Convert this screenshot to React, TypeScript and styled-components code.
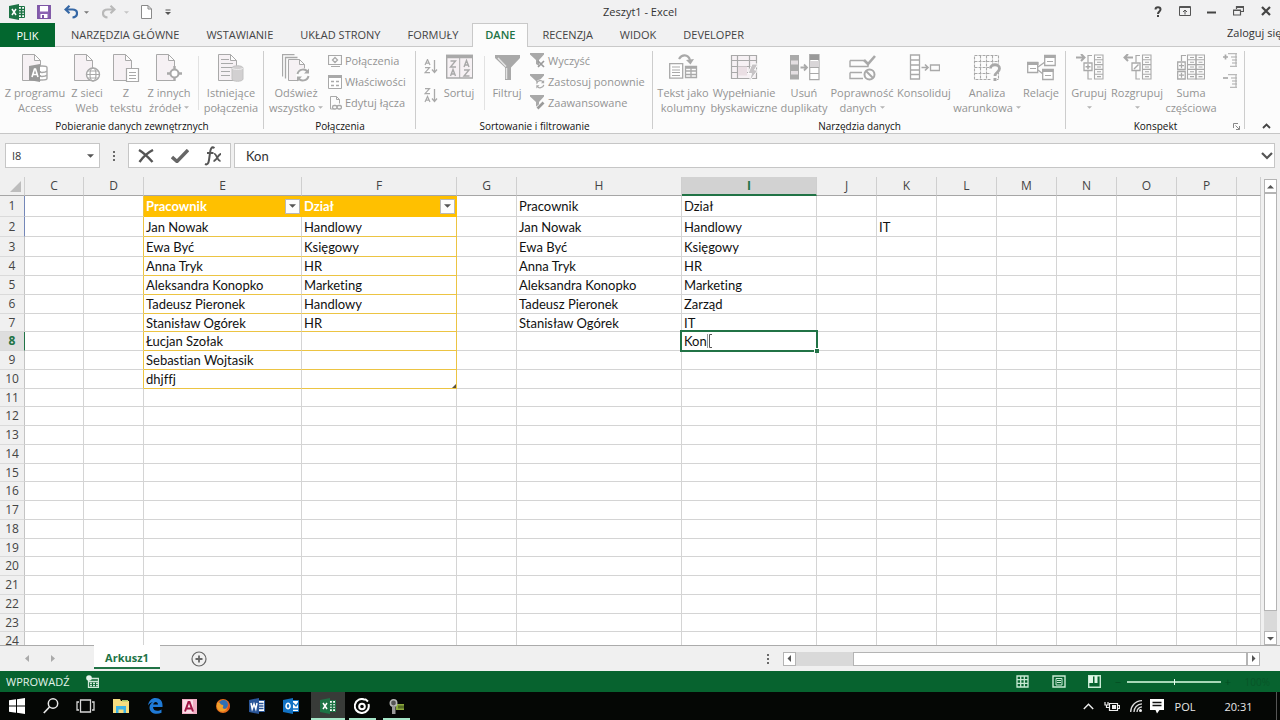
import React, { useState } from 'react';
import styled, { createGlobalStyle } from 'styled-components';

const UI = '"Open Sans", "Noto Sans", sans-serif';
const CELL = 'Lato, "Open Sans", sans-serif';
const GREEN = '#217346';
const BAR = '#07632f';
const G = '#a9a9a9';
const GD = '#9a9a9a';
const TINT = '#f6f1f4';

const Global = createGlobalStyle`
  *, *::before, *::after { box-sizing: border-box; }
  body { margin: 0; background: #f0f0f0; font-family: ${UI}; font-size: 11px; color: #333; overflow: hidden; }
  button, input { font: inherit; color: inherit; margin: 0; padding: 0; border: 0; background: none; border-radius: 0; outline: 0; }
  button { cursor: default; }
  svg { display: block; flex: none; }
`;

const Window = styled.div`
  display: flex;
  flex-direction: column;
  height: 100vh;
  font-variant-ligatures: none;
`;

/* ---------- title bar ---------- */
const TitleBar = styled.header`
  display: grid;
  grid-template-columns: 1fr auto 1fr;
  height: 23px;
  background: #f1f1f2;
`;
const QuickAccess = styled.div`
  display: flex;
  align-items: center;
  padding-left: 8px;
`;
const QuickButton = styled.button<{ $w: number }>`
  display: flex;
  justify-content: center;
  align-items: center;
  width: ${(p) => p.$w}px;
  height: 22px;
`;
const Title = styled.h1`
  margin: 0;
  font-size: 11px;
  font-weight: 400;
  line-height: 24px;
  color: #333;
`;
const WindowButtons = styled.div`
  display: flex;
  justify-content: flex-end;
  padding-right: 1px;
`;
const WindowButton = styled.button`
  display: flex;
  align-items: center;
  justify-content: center;
  width: 27px;
  height: 22px;
`;

/* ---------- tabs ---------- */
const TabRow = styled.nav`
  display: flex;
  height: 24px;
  background: #f1f1f2;
  border-bottom: 1px solid #c9c9c9;
`;
const FileTab = styled.button`
  width: 55px;
  height: 24px;
  margin-right: 3px;
  background: #03672f;
  color: #fff;
`;
const Tab = styled.button<{ $active?: boolean }>`
  height: 24px;
  padding: 0 12px 2px;
  border: 1px solid ${(p) => (p.$active ? '#c9c9c9' : 'transparent')};
  border-bottom: 0;
  background: ${(p) => (p.$active ? '#fcfcfc' : 'transparent')};
  color: ${(p) => (p.$active ? GREEN : '#444')};
  font-weight: ${(p) => (p.$active ? 600 : 400)};
  white-space: nowrap;
  & + & { margin-left: 1px; }
`;
const SignIn = styled.a`
  width: 53px;
  margin-left: auto;
  overflow: hidden;
  line-height: 20px;
  white-space: nowrap;
  color: #333;
  text-decoration: none;
`;

/* ---------- ribbon ---------- */
const Ribbon = styled.section`
  display: flex;
  height: 87px;
  background: #fcfcfc;
  border-bottom: 1px solid #c6c6c6;
`;
const Group = styled.div<{ $w: number }>`
  position: relative;
  display: flex;
  flex-direction: column;
  flex: none;
  width: ${(p) => p.$w}px;
  &::after {
    content: '';
    position: absolute;
    right: 0;
    top: 4px;
    bottom: 4px;
    width: 1px;
    background: #cdcdcd;
  }
`;
const GroupBody = styled.div<{ $pad: number }>`
  display: flex;
  height: 72px;
  padding-left: ${(p) => p.$pad}px;
`;
const GroupLabel = styled.div`
  font-size: 10px;
  line-height: 14px;
  text-align: center;
  color: #111;
`;
const BigButton = styled.button<{ $w: number }>`
  display: flex;
  flex-direction: column;
  align-items: center;
  flex: none;
  width: ${(p) => p.$w}px;
  padding-top: 7px;
  color: #949494;
  line-height: 15px;
  white-space: nowrap;
  & > svg { margin-bottom: 3px; }
`;
const Line = styled.span`
  display: flex;
  align-items: center;
  gap: 3px;
  height: 15px;
`;
const Divider = styled.div<{ $l: number; $r: number }>`
  width: 1px;
  height: 54px;
  margin: 9px ${(p) => p.$r}px 0 ${(p) => p.$l}px;
  background: #e2e2e2;
`;
const Stack = styled.div<{ $gap?: number; $top?: number; $left?: number }>`
  display: flex;
  flex-direction: column;
  gap: ${(p) => p.$gap || 0}px;
  padding: ${(p) => p.$top || 3}px 0 0 ${(p) => p.$left || 0}px;
`;
const SmallButton = styled.button`
  display: flex;
  align-items: center;
  gap: 3px;
  height: 21px;
  color: #949494;
  white-space: nowrap;
`;
const RibbonTail = styled.div`
  display: flex;
  flex: 1;
  justify-content: flex-end;
  align-items: flex-end;
  padding: 0 9px 4px 0;
`;
const Launcher = styled.button`
  position: absolute;
  right: 5px;
  bottom: 3px;
`;

/* ---------- formula bar ---------- */
const FormulaBar = styled.div`
  display: flex;
  align-items: center;
  height: 43px;
  padding: 0 5px;
  background: #f0f0f0;
`;
const Field = styled.div<{ $w?: number }>`
  display: flex;
  align-items: center;
  height: 25px;
  border: 1px solid #c6c6c6;
  background: #fff;
  ${(p) => (p.$w ? `width: ${p.$w}px; flex: none;` : 'flex: 1; margin-left: 3px;')}
`;
const NameInput = styled.input`
  flex: 1;
  min-width: 0;
  padding-left: 6px;
`;
const FormulaInput = styled.input`
  flex: 1;
  min-width: 0;
  padding-left: 11px;
  font-family: ${CELL};
  font-size: 13px;
`;
const FieldButton = styled.button<{ $w: number }>`
  display: flex;
  align-items: center;
  justify-content: center;
  width: ${(p) => p.$w}px;
  height: 23px;
`;
const Dots = styled.div<{ $w: number }>`
  display: flex;
  flex: none;
  flex-direction: column;
  align-items: center;
  justify-content: center;
  gap: 2px;
  width: ${(p) => p.$w}px;
  & > i { width: 2px; height: 2px; background: #6a6a6a; }
`;

/* ---------- sheet ---------- */
const SheetArea = styled.main`
  display: flex;
  flex: 1;
  min-height: 0;
  background: #f0f0f0;
`;
const GridClip = styled.div`
  flex: 1;
  min-width: 0;
  overflow: hidden;
`;
const Grid = styled.table`
  width: 100%;
  table-layout: fixed;
  border-spacing: 0;
  border-collapse: separate;
  background: #fff;
  font-family: ${CELL};
  font-size: 13px;
  line-height: 16px;
  color: #111;
`;
const BodyRow = styled.tr`
  height: 19px;
  &:nth-child(4n + 3) { height: 18px; }
  &:nth-child(1) { height: 21px; }
  &:nth-child(2), &:nth-child(3) { height: 20px; }
`;
const ColHead = styled.th<{ $active?: boolean }>`
  height: 19px;
  padding: 0;
  font-family: ${UI};
  font-size: 12px;
  font-weight: ${(p) => (p.$active ? 700 : 400)};
  color: ${(p) => (p.$active ? GREEN : '#444')};
  background: ${(p) => (p.$active ? '#d2d2d2' : '#f0f0f0')};
  border-right: 1px solid #cfcfcf;
  border-bottom: ${(p) => (p.$active ? `2px solid ${GREEN}` : '1px solid #a6a6a6')};
`;
const Corner = styled(ColHead)`
  & > svg { margin: 0 0 0 10px; }
`;
const RowHead = styled.th<{ $active?: boolean; $mark?: boolean }>`
  padding: 0;
  font-family: ${UI};
  font-size: 12px;
  font-weight: ${(p) => (p.$active ? 700 : 400)};
  color: ${(p) => (p.$active ? GREEN : '#444')};
  background: ${(p) => (p.$active ? '#dedede' : '#f0f0f0')};
  border-bottom: 1px solid #dadada;
  border-right: 1px solid ${(p) => (p.$active ? GREEN : p.$mark ? '#7487b8' : '#c4c4c4')};
`;
const Cell = styled.td<{ $gold?: boolean; $goldRight?: boolean }>`
  position: relative;
  padding: 0 2px;
  white-space: nowrap;
  border-right: 1px solid ${(p) => (p.$goldRight ? '#ecc443' : '#d4d4d4')};
  border-bottom: 1px solid ${(p) => (p.$gold ? '#ecc443' : '#d4d4d4')};
`;
const TableHeadCell = styled(Cell)`
  background: #ffc000;
  border-color: #ffc000;
  color: #fff;
  font-weight: 700;
  padding: 0 1px 0 2px;
`;
const HeadContent = styled.div`
  display: flex;
  align-items: center;
  justify-content: space-between;
`;
const FilterButton = styled.button`
  display: flex;
  align-items: center;
  justify-content: center;
  width: 15px;
  height: 15px;
  background: #fdfdfd;
  border: 1px solid #b9b9b9;
`;
const TableCorner = styled.span`
  position: absolute;
  right: 0;
  bottom: 0;
  border: 2px solid #5b5340;
  border-left-color: transparent;
  border-top-color: transparent;
`;
const ActiveFrame = styled.div`
  position: absolute;
  inset: -2px;
  z-index: 1;
  border: 2px solid ${GREEN};
  pointer-events: none;
  &::after {
    content: '';
    position: absolute;
    right: -3px;
    bottom: -3px;
    width: 5px;
    height: 5px;
    background: ${GREEN};
    border: solid #fff;
    border-width: 1px 0 0 1px;
  }
`;
const CellInput = styled.input`
  display: block;
  width: 100%;
  height: 16px;
`;
const Pointer = styled.svg`
  position: absolute;
  left: 23px;
  top: 1px;
`;

/* ---------- scroll bars ---------- */
const VScroll = styled.div`
  display: flex;
  flex-direction: column;
  flex: none;
  width: 16px;
  padding: 2px 3px 0 0;
  margin-left: 3px;
`;
const HScroll = styled.div`
  display: flex;
  width: 477px;
  height: 14px;
  margin-right: 20px;
`;
const ScrollButton = styled.button`
  display: flex;
  align-items: center;
  justify-content: center;
  flex: none;
  width: 13px;
  height: 14px;
  background: #fff;
  border: 1px solid #b4b4b4;
`;
const Thumb = styled.div`
  flex: 1;
  background: #fff;
  border: 1px solid #b4b4b4;
`;
const Track = styled.div<{ $size: number }>`
  flex: 0 0 ${(p) => p.$size}px;
  background: #d9d9d9;
`;

/* ---------- sheet tabs ---------- */
const SheetTabs = styled.div`
  display: flex;
  align-items: center;
  height: 26px;
  background: #f0f0f0;
`;
const NavButton = styled.button`
  display: flex;
  justify-content: center;
  width: 26px;
`;
const SheetNav = styled.div`
  display: flex;
  align-items: center;
  align-self: flex-start;
  width: 94px;
  height: 26px;
  padding-left: 14px;
  border-top: 1px solid #ababab;
`;
const SheetTab = styled.button`
  align-self: flex-start;
  width: 66px;
  height: 24px;
  padding-top: 2px;
  background: #fff;
  border-bottom: 2px solid ${GREEN};
  color: ${GREEN};
  font-weight: 700;
`;
const TabRest = styled.div`
  display: flex;
  flex: 1;
  align-items: center;
  align-self: flex-start;
  height: 26px;
  border-top: 1px solid #ababab;
  padding-left: 31px;
`;
const Spacer = styled.div`
  flex: 1;
`;

/* ---------- status bar ---------- */
const StatusBar = styled.footer`
  display: flex;
  align-items: center;
  height: 21px;
  padding-left: 6px;
  background: ${BAR};
  color: #e4f3ea;
  & > svg { margin-left: 16px; }
`;
const ViewButtons = styled.div`
  display: flex;
  gap: 22px;
  margin-right: 11px;
`;
const ViewButton = styled.button`
  width: 14px;
`;
const ZoomMark = styled.button`
  width: 8px;
  margin: 0 1px;
  line-height: 20px;
  color: #044d22;
`;
const ZoomSlider = styled.input`
  width: 94px;
  height: 14px;
  margin: 0 2px 0 4px;
  appearance: none;
  background: linear-gradient(#a8d8b8, #a8d8b8) center / 100% 2px no-repeat;
  &::-webkit-slider-thumb {
    appearance: none;
    width: 1px;
    height: 6px;
    background: #e8fff0;
  }
`;
const ZoomValue = styled.span`
  width: 47px;
  padding-right: 10px;
  text-align: right;
  font-size: 10px;
  color: #075528;
`;

/* ---------- task bar ---------- */
const TaskBar = styled.footer`
  display: flex;
  height: 28px;
  background: #050705;
  color: #e8e8e8;
`;
const TaskButton = styled.button`
  display: flex;
  align-items: center;
  justify-content: center;
  width: 34px;
  height: 28px;
`;
const Pinned = styled.div`
  display: flex;
  padding: 0 3px 0 2px;
`;
const RunningButton = styled(TaskButton)<{ $active?: boolean }>`
  position: relative;
  background: ${(p) => (p.$active ? '#383b38' : 'transparent')};
  &::after {
    content: '';
    position: absolute;
    bottom: 0;
    left: ${(p) => (p.$active ? 0 : 4)}px;
    right: ${(p) => (p.$active ? 0 : 3)}px;
    height: 2px;
    background: #a5e6c8;
  }
`;
const Tray = styled.div`
  display: flex;
  align-items: center;
  margin-left: auto;
  height: 28px;
`;
const TrayButton = styled.button<{ $w: number }>`
  display: flex;
  justify-content: center;
  width: ${(p) => p.$w}px;
  white-space: nowrap;
`;
const ShowDesktop = styled.button`
  width: 4px;
  height: 28px;
  border-left: 1px solid #555;
`;

/* ---------- icons ---------- */
type IcoProps = { w: number; h: number; children: React.ReactNode; stroke?: string };
const Ico = ({ w, h, children, stroke = G }: IcoProps) => (
  <svg width={w} height={h} viewBox={`0 0 ${w} ${h}`} fill="none" stroke={stroke} strokeWidth="1" aria-hidden="true">
    {children}
  </svg>
);
const Caret = ({ c = '#b5b5b5', w = 5 }: { c?: string; w?: number }) => (
  <svg width={w} height={(w + 1) / 2} viewBox="0 0 6 3" fill={c} aria-hidden="true"><path d="M0 0h6L3 3z" /></svg>
);
const Doc = ({ x = 0 }: { x?: number }) => (
  <path d={`M${x + 0.5} .5h12l6 6v20h-18zM${x + 12.5} .5v6h6`} fill={TINT} />
);

const AccessIco = () => (
  <Ico w={27} h={28}>
    <Doc />
    <path d="M15 13.5c0-2 10-2 10 0v11c0 2-10 2-10 0zM15 17c2 2 8 2 10 0M15 21c2 2 8 2 10 0" fill="#fff" strokeWidth="1.4" />
    <path d="M7 12l11-2v18l-11-2z" fill="#999" stroke="none" />
    <path d="M10 23l2.500-8h1l2.500 8M11 20.500h4" stroke="#fff" strokeWidth="1.600" />
  </Ico>
);
const WebIco = () => (
  <Ico w={27} h={28}>
    <Doc />
    <circle cx="19" cy="20.500" r="6.500" fill="#fff" strokeWidth="1.400" />
    <ellipse cx="19" cy="20.500" rx="3" ry="6.500" strokeWidth="1.200" />
    <path d="M12.500 20.500h13M13.500 17h11M13.500 24h11" strokeWidth="1.200" />
  </Ico>
);
const TextIco = () => (
  <Ico w={27} h={28}>
    <Doc />
    <path d="M13.500 14.500h12v13h-12z" fill="#fff" strokeWidth="1.200" />
    <path d="M16 18.500h7M16 21.500h7M16 24.500h7" />
  </Ico>
);
const SourcesIco = () => (
  <Ico w={27} h={28}>
    <Doc />
    <circle cx="18.500" cy="19.500" r="4" fill="#fff" strokeWidth="2" />
    <path d="M18.500 12v4M18.500 23v4M11 19.500h4M22 19.500h4" strokeWidth="2.400" />
  </Ico>
);
const ExistingIco = () => (
  <Ico w={27} h={28}>
    <Doc />
    <path d="M3 5.500h8M3 9.500h12M3 13.500h12M3 17.500h9M3 21.500h9" />
    <path d="M14 14c0-3 11-3 11 0v11c0 3-11 3-11 0z" fill="#d2d0d1" stroke="#c2c2c2" />
    <path d="M14 14c1 2 10 2 11 0" stroke="#eee" />
  </Ico>
);
const RefreshArrows = ({ x, y, s = 1 }: { x: number; y: number; s?: number }) => (
  <g transform={`translate(${x} ${y}) scale(${s})`} strokeWidth="2">
    <path d="M1 5.500c1-5 8-6 10-2M12 7.500c-1 5-8 6-10 2" />
    <path d="M12.500 0v5h-5zM.5 13v-5h5z" fill={G} stroke="none" />
  </g>
);
const RefreshIco = () => (
  <Ico w={29} h={28}>
    <path d="M.5 22.500v-22h12M3.500 24.500v-21h12" strokeWidth="1.300" />
    <path d="M6.500 5.500h11l5 5v16h-16zM17.500 5.500v5h5" fill={TINT} />
    <circle cx="21" cy="21" r="7" fill="#fcfcfc" stroke="none" />
    <RefreshArrows x={14.500} y={14.500} />
  </Ico>
);
const ConnectionsIco = () => (
  <Ico w={14} h={13}>
    <path d="M.5 1.500h13v9H.5zM3 12.500h9" strokeWidth="1.200" />
    <path d="M7 3.500l2.500 2.500L7 8.500 4.500 6z" strokeWidth="1.300" />
  </Ico>
);
const PropertiesIco = () => (
  <Ico w={14} h={14}>
    <path d="M.5 .5h13v13H.5z" fill="#fff" />
    <path d="M0 1.500h14" strokeWidth="3" />
    <path d="M3 6.500h3M8 6.500h3M3 10.500h3M8 10.500h3" strokeWidth="1.500" />
  </Ico>
);
const LinksIco = () => (
  <Ico w={14} h={14}>
    <path d="M5.500 13H2.500V.5h6l3 3v4M8.500 .5v3h3" />
    <rect x="4.500" y="9.500" width="4.500" height="3.500" rx="1.700" strokeWidth="1.300" />
    <rect x="9" y="9.500" width="4.500" height="3.500" rx="1.700" strokeWidth="1.300" />
  </Ico>
);
const SortIco = ({ flip }: { flip?: boolean }) => {
  const a = 'M1 6L3.500 .5 6 6M2 4.200h3';
  const z = 'M1 .7h4.500L1 5.700h5';
  return (
    <Ico w={14} h={15}>
      <path d={flip ? z : a} strokeWidth="1.200" />
      <g transform="translate(0 8)"><path d={flip ? a : z} strokeWidth="1.200" /></g>
      <path d="M10.500 1v12M8 10.500l2.500 3 2.500-3" strokeWidth="1.300" />
    </Ico>
  );
};
const SortDialogIco = () => (
  <Ico w={27} h={28}>
    <path d="M.7 1.500h26v22.500H.7z" fill={TINT} strokeWidth="1.400" />
    <path d="M0 2.500h27" strokeWidth="3.500" />
    <path d="M13.700 4v20" />
    <path d="M4.500 7h5l-5 6h5.500M18 13l2.500-6.500L23 13M19 11h3M4.500 22L7 15.500 9.500 22M5.500 20h3M18 16h5l-5 6h5.500" strokeWidth="1.400" />
  </Ico>
);
const FilterIco = () => (
  <Ico w={27} h={28}>
    <path d="M1 1h25v3l-9 9.500V26h-6V13.500L1 4z" fill={G} stroke="none" />
    <path d="M12.500 14v11M4 4l8 8.500" stroke="#e4e4e4" strokeWidth="1.500" />
  </Ico>
);
const SmallFunnel = ({ kind }: { kind: 'clear' | 'again' | 'adv' }) => (
  <Ico w={15} h={15}>
    <path d="M0 0h14v1.500L9 7v6l-3-2V7L0 1.500z" fill={G} stroke="none" />
    {kind === 'clear' && <path d="M8 8l6 6M14 8l-6 6" stroke={GD} strokeWidth="1.700" />}
    {kind === 'again' && (<><circle cx="10.500" cy="10" r="4.500" fill="#fcfcfc" stroke="none" /><RefreshArrows x={6} y={6} s={0.65} /></>)}
    {kind === 'adv' && (<><path d="M6 15l1-4 6-5 2 2-6 5z" fill="#fcfcfc" stroke="none" /><path d="M7.500 13.500l6-6" stroke={GD} strokeWidth="2.600" /></>)}
  </Ico>
);
const TextToColumnsIco = () => (
  <Ico w={29} h={28}>
    <path d="M.7 9.700h13v14.500H.7z" fill="#fff" strokeWidth="1.300" />
    <path d="M3 13h8M3 16h8M3 18.500h8M3 21.500h8" />
    <path d="M10 5c3-5 9-5 11 1" strokeWidth="2.200" />
    <path d="M17 6l8-1-3.500 5.500z" fill={G} stroke="none" />
    <path d="M16.500 12.500h11v11h-11zM16.500 17h11M16.500 20.500h11M22 14v9" strokeWidth="1.300" />
    <path d="M16 13.500h12" strokeWidth="2.600" />
  </Ico>
);
const FlashFillIco = () => (
  <Ico w={29} h={28}>
    <path d="M1.500 1.500h25v23h-25zM1.500 6.500h25M1.500 12.500h25M1.500 18.500h25M7.500 1.500v23M19.500 1.500v17" fill={TINT} strokeWidth="1.200" />
    <path d="M8 12.500h9v9H8z" fill="#eadfe4" stroke="none" />
    <path d="M22 10h6l-3.500 6H28l-9 12 2.500-8.500H18z" fill="#c6c3c5" stroke="#fcfcfc" />
  </Ico>
);
const DuplicatesIco = () => (
  <Ico w={31} h={28}>
    <path d="M1 1h9v24.500H1z" fill="#aaa" stroke="none" />
    <path d="M2 6.500h7v4H2zM2 17h7v3.500H2z" fill="#e4dfe2" stroke="none" />
    <path d="M20.700 .7h9.300v25h-9.300zM20.700 13.500h9.300M20.700 19.500h9.300" fill="#fff" strokeWidth="1.200" />
    <path d="M21 1h9v5h-9z" fill="#999" stroke="none" />
    <path d="M21 7h9v6h-9z" fill="#d9d6d8" stroke="none" />
    <path d="M11.500 13.500h6M15 10.500l3 3-3 3" strokeWidth="1.800" />
  </Ico>
);
const ValidationIco = () => (
  <Ico w={27} h={28}>
    <path d="M1 6.500h14M1 6.500v6h18v-3M1 18.500h12M1 18.500v6h13" strokeWidth="1.400" />
    <path d="M15 6l4 4 7-8" strokeWidth="2.600" />
    <circle cx="20.500" cy="20.500" r="5" strokeWidth="2" />
    <path d="M17 17l7 7" strokeWidth="2" />
  </Ico>
);
const ConsolidateIco = () => (
  <Ico w={31} h={28}>
    <path d="M1.500 1h9v24h-9zM1.500 6h9M1.500 11h9M1.500 16h9M1.500 20.500h9" strokeWidth="1.300" fill="#fff" />
    <path d="M12.500 13.500h6M16 10.500l3 3-3 3" strokeWidth="1.600" />
    <path d="M21.500 11h9v5.500h-9z" strokeWidth="1.300" />
  </Ico>
);
const WhatIfIco = () => (
  <Ico w={29} h={28}>
    <path d="M1.500 1.500h24v24h-24zM1.500 7.500h24M1.500 13.500h24M1.500 19.500h24M7.500 1.500v24M13.500 1.500v24M19.500 1.500v24" strokeWidth="1.100" strokeDasharray="3 1" />
    <path d="M16 15v-5h11v6l-3 5v7h-6v-7z" fill="#fcfcfc" stroke="none" />
    <path d="M17.500 14.500c0-5 9-5 9 0 0 4-4.500 3.500-4.500 7.500" strokeWidth="2.800" />
    <path d="M22 24v3" strokeWidth="3" />
  </Ico>
);
const RelationsIco = () => (
  <Ico w={29} h={28}>
    <path d="M11 13l7-5M11 16l5 4" strokeWidth="1.300" />
    <path d="M.7 8.500h10v10H.7zM17.700 1.500h10.500v10H17.700zM15.700 15.500h10.500v10H15.700z" fill="#fff" strokeWidth="1.300" />
    <path d="M0 9.500h11.500M17 2.500h11.500M15 16.500h11.500" strokeWidth="3" />
    <path d="M3 14.500h6M20 7.500h6M18 21.500h6" />
  </Ico>
);
const OutlineCells = ({ x }: { x: number }) => (
  <path d={`M${x} 1h8.500v24h-8.500zM${x} 5.800h8.500M${x} 10.600h8.500M${x} 15.400h8.500M${x} 20.200h8.500M${x + 2.500} 3.500h4M${x + 2.500} 8.200h4M${x + 2.500} 13h4M${x + 2.500} 17.800h4M${x + 2.500} 22.600h4`} strokeWidth="1.100" />
);
const GroupIco = ({ un }: { un?: boolean }) => (
  <Ico w={29} h={28}>
    <OutlineCells x={19.500} />
    <path d="M17 1.500h-4v7M13 17v8h4" strokeWidth="1.200" />
    <path d="M9 9h8v7.500H9z" fill="#fff" strokeWidth="1.300" />
    {un ? <path d="M11 15l4.500-4.500" strokeWidth="1.500" /> : <path d="M10.500 12.800h5M13 10.300v5" strokeWidth="1.500" />}
    {un ? <path d="M10 3.500H2M5 0L1.500 3.500 5 7" strokeWidth="2" /> : <path d="M1 3.500h8M6 0l3.500 3.500L6 7" strokeWidth="2" />}
  </Ico>
);
const SubtotalIco = () => (
  <Ico w={28} h={28}>
    <OutlineCells x={10.500} />
    <OutlineCells x={19} />
    <path d="M9 1.500H4.500V7" strokeWidth="1.200" />
    <path d="M.7 8h7.500v7.500H.7zM.7 17.500h7.500V25H.7z" fill="#fff" strokeWidth="1.300" />
    <path d="M2 11.700h5M4.500 9.300v5M2 21.200h5M4.500 18.800v5" strokeWidth="1.300" />
  </Ico>
);
const DetailIco = ({ plus }: { plus?: boolean }) => (
  <Ico w={14} h={14}>
    <path d={plus ? 'M0 4h5M2.500 1.500v5' : 'M0 4h5'} strokeWidth="1.700" />
    <path d="M5 .7h9M8 4h6M9 7h5M9 10h5M7 13.300h7M13 1v12" />
  </Ico>
);

/* ---------- office and task bar logos ---------- */
const OfficeLogo = ({ color, letter, lines }: { color: string; letter: 'X' | 'W' | 'O'; lines: string }) => {
  const glyph = { X: 'M3 5l4 6M7 5l-4 6', W: 'M2 5l1.200 6L5 6l1.800 5L8 5', O: 'M5 5.300a2 2.700 0 1 0 .1 0z' }[letter];
  return (
    <Ico w={16} h={16} stroke={color}>
      <path d="M9 2.500h6.500v11H9z" fill="#fff" />
      <path d={lines} strokeWidth="1.300" />
      <path d="M0 2l10-2v16L0 14z" fill={color} stroke="none" />
      <path d={glyph} stroke="#fff" strokeWidth="1.500" />
    </Ico>
  );
};
const ExcelLogo = () => <OfficeLogo color="#1d7345" letter="X" lines="M10 5.500h5M10 8h5M10 10.500h5M12.500 3v10" />;

/* ---------- data ---------- */
const COLS = ['C', 'D', 'E', 'F', 'G', 'H', 'I', 'J', 'K', 'L', 'M', 'N', 'O', 'P', ''];
const WIDTHS = [59, 60, 158, 155, 60, 165, 135, 60, 60, 60, 60, 60, 60, 60];
const DATA: Record<string, string[]> = {
  E: ['Pracownik', 'Jan Nowak', 'Ewa Być', 'Anna Tryk', 'Aleksandra Konopko', 'Tadeusz Pieronek', 'Stanisław Ogórek', 'Łucjan Szołak', 'Sebastian Wojtasik', 'dhjffj'],
  F: ['Dział', 'Handlowy', 'Księgowy', 'HR', 'Marketing', 'Handlowy', 'HR'],
  H: ['Pracownik', 'Jan Nowak', 'Ewa Być', 'Anna Tryk', 'Aleksandra Konopko', 'Tadeusz Pieronek', 'Stanisław Ogórek'],
  I: ['Dział', 'Handlowy', 'Księgowy', 'HR', 'Marketing', 'Zarząd', 'IT'],
  K: ['', 'IT'],
};
const ROWS = Array.from({ length: 24 }, (_, i) => i + 1);
const TABS = ['NARZĘDZIA GŁÓWNE', 'WSTAWIANIE', 'UKŁAD STRONY', 'FORMUŁY', 'DANE', 'RECENZJA', 'WIDOK', 'DEVELOPER'];

type BigProps = { w: number; icon: React.ReactNode; a: string; b?: string; caret?: boolean };
const Big = ({ w, icon, a, b, caret }: BigProps) => (
  <BigButton $w={w}>
    {icon}
    <Line>{a}</Line>
    {(b || caret) && <Line>{b}{caret && <Caret />}</Line>}
  </BigButton>
);

const Arrow = ({ d }: { d: string }) => (
  <svg width="7" height="7" viewBox="0 0 7 7" fill="#555" aria-hidden="true"><path d={d} /></svg>
);

export default function App() {
  const [value, setValue] = useState('Kon');
  const [name, setName] = useState('I8');
  const edit = (e: React.ChangeEvent<HTMLInputElement>) => setValue(e.target.value);

  const renderCell = (col: string, row: number) => {
    const text = (DATA[col] || [])[row - 1] || '';
    const inTable = (col === 'E' || col === 'F') && row <= 10;
    if (inTable && row === 1) {
      return (
        <TableHeadCell key={col}>
          <HeadContent>
            {text}
            <FilterButton aria-label={`Filtruj: ${text}`}><Caret c="#555" w={7} /></FilterButton>
          </HeadContent>
        </TableHeadCell>
      );
    }
    if (col === 'I' && row === 8) {
      return (
        <Cell key={col}>
          <CellInput aria-label="Komórka I8" value={value} onChange={edit} />
          <ActiveFrame />
          <Pointer width="9" height="16" viewBox="0 0 9 16" fill="none" stroke="#777" aria-hidden="true">
            <path d="M2.500 1v14" stroke="#999" strokeWidth="1" />
            <path d="M4.500 1.500v13M4.500 1.500h2.500M4.500 14.500h2.500" stroke="#555" />
          </Pointer>
        </Cell>
      );
    }
    return (
      <Cell key={col || 'last'} $gold={inTable} $goldRight={row <= 10 && (col === 'D' || col === 'F')}>
        {text}
        {col === 'F' && row === 10 && <TableCorner />}
      </Cell>
    );
  };

  return (
    <Window>
      <Global />
      <TitleBar>
        <QuickAccess>
          <QuickButton $w={18} aria-label="Excel"><ExcelLogo /></QuickButton>
          <QuickButton $w={36} aria-label="Zapisz">
            <Ico w={14} h={14} stroke="#7d55a5">
              <path d="M.8 .8h12.400v12.400H.8z" fill="#8b63b3" strokeWidth="1.500" />
              <path d="M3 1h8v5.500H3zM3.500 9h7v4h-7z" fill="#fff" stroke="none" />
              <path d="M5 10h2v3H5z" fill="#7d55a5" stroke="none" />
            </Ico>
          </QuickButton>
          <QuickButton $w={18} aria-label="Cofnij">
            <Ico w={14} h={14} stroke="#3567a5"><path d="M1.500 4.500h7c6 0 6 7.500 0 8M5.500 .8L1.500 4.500l4 3.700" strokeWidth="2.200" /></Ico>
          </QuickButton>
          <QuickButton $w={12} aria-label="Lista cofania"><Caret c="#777" /></QuickButton>
          <QuickButton $w={34} aria-label="Wykonaj ponownie">
            <Ico w={14} h={14} stroke="#b9b9b9"><path d="M12.500 4.500h-7c-6 0-6 7.500 0 8M8.500 .8l4 3.700-4 3.700" strokeWidth="2.200" /></Ico>
          </QuickButton>
          <QuickButton $w={0} aria-label="Lista ponawiania"><Caret c="#c4c4c4" /></QuickButton>
          <QuickButton $w={40} aria-label="Nowy">
            <Ico w={11} h={14} stroke="#8a8a8a"><path d="M.5 .5h6.500l3.500 3.500v9.500H.5zM7 .5V4h3.500" fill="#fff" /></Ico>
          </QuickButton>
          <QuickButton $w={4} aria-label="Dostosuj pasek">
            <Ico w={6} h={7} stroke="#555"><path d="M.5 1h5" /><path d="M0 3h6L3 6z" fill="#555" stroke="none" /></Ico>
          </QuickButton>
        </QuickAccess>
        <Title>Zeszyt1 - Excel</Title>
        <WindowButtons>
          <WindowButton aria-label="Pomoc">
            <Ico w={8} h={11} stroke="#444"><path d="M1.500 3.500c0-3 5-3 5 0 0 2-2.500 2-2.500 4.500M4 9v2" strokeWidth="2" /></Ico>
          </WindowButton>
          <WindowButton aria-label="Opcje wstążki">
            <Ico w={12} h={10} stroke="#555"><path d="M.5 .5h11v9H.5zM0 1.500h12M6 8.500V4M4 6l2-2 2 2" /></Ico>
          </WindowButton>
          <WindowButton aria-label="Minimalizuj">
            <Ico w={9} h={6} stroke="#444"><path d="M0 4.500h9" strokeWidth="2" /></Ico>
          </WindowButton>
          <WindowButton aria-label="Przywróć">
            <Ico w={11} h={10} stroke="#555"><path d="M3.500 3V.5h7v5H8M3 1.500h8M.5 4h7v5h-7zM0 4.500h8" strokeWidth="1.200" /></Ico>
          </WindowButton>
          <WindowButton aria-label="Zamknij">
            <Ico w={10} h={10} stroke="#444"><path d="M1 1l8 8M9 1L1 9" strokeWidth="2.200" /></Ico>
          </WindowButton>
        </WindowButtons>
      </TitleBar>

      <TabRow>
        <FileTab>PLIK</FileTab>
        {TABS.map((t) => <Tab key={t} $active={t === 'DANE'}>{t}</Tab>)}
        <SignIn href="#">Zaloguj się</SignIn>
      </TabRow>

      <Ribbon>
        <Group $w={264}>
          <GroupBody $pad={5}>
            <Big w={60} icon={<AccessIco />} a="Z programu" b="Access" />
            <Big w={44} icon={<WebIco />} a="Z sieci" b="Web" />
            <Big w={34} icon={<TextIco />} a="Z" b="tekstu" />
            <Big w={52} icon={<SourcesIco />} a="Z innych" b="źródeł" caret />
            <Divider $l={3} $r={4} />
            <Big w={56} icon={<ExistingIco />} a="Istniejące" b="połączenia" />
          </GroupBody>
          <GroupLabel>Pobieranie danych zewnętrznych</GroupLabel>
        </Group>
        <Group $w={152}>
          <GroupBody $pad={4}>
            <Big w={56} icon={<RefreshIco />} a="Odśwież" b="wszystko" caret />
            <Stack $left={4}>
              <SmallButton><ConnectionsIco />Połączenia</SmallButton>
              <SmallButton><PropertiesIco />Właściwości</SmallButton>
              <SmallButton><LinksIco />Edytuj łącza</SmallButton>
            </Stack>
          </GroupBody>
          <GroupLabel>Połączenia</GroupLabel>
        </Group>
        <Group $w={237}>
          <GroupBody $pad={8}>
            <Stack $gap={8} $top={9}>
              <SmallButton aria-label="Sortuj od A do Z"><SortIco /></SmallButton>
              <SmallButton aria-label="Sortuj od Z do A"><SortIco flip /></SmallButton>
            </Stack>
            <Big w={42} icon={<SortDialogIco />} a="Sortuj" />
            <Divider $l={4} $r={2} />
            <Big w={40} icon={<FilterIco />} a="Filtruj" />
            <Stack $left={3}>
              <SmallButton><SmallFunnel kind="clear" />Wyczyść</SmallButton>
              <SmallButton><SmallFunnel kind="again" />Zastosuj ponownie</SmallButton>
              <SmallButton><SmallFunnel kind="adv" />Zaawansowane</SmallButton>
            </Stack>
          </GroupBody>
          <GroupLabel>Sortowanie i filtrowanie</GroupLabel>
        </Group>
        <Group $w={413}>
          <GroupBody $pad={3}>
            <Big w={54} icon={<TextToColumnsIco />} a="Tekst jako" b="kolumny" />
            <Big w={68} icon={<FlashFillIco />} a="Wypełnianie" b="błyskawiczne" />
            <Big w={52} icon={<DuplicatesIco />} a="Usuń" b="duplikaty" />
            <Big w={64} icon={<ValidationIco />} a="Poprawność" b="danych" caret />
            <Big w={60} icon={<ConsolidateIco />} a="Konsoliduj" />
            <Big w={66} icon={<WhatIfIco />} a="Analiza" b="warunkowa" caret />
            <Big w={42} icon={<RelationsIco />} a="Relacje" />
          </GroupBody>
          <GroupLabel>Narzędzia danych</GroupLabel>
        </Group>
        <Group $w={179}>
          <GroupBody $pad={3}>
            <Big w={40} icon={<GroupIco />} a="Grupuj" caret />
            <Big w={56} icon={<GroupIco un />} a="Rozgrupuj" caret />
            <Big w={52} icon={<SubtotalIco />} a="Suma" b="częściowa" />
            <Stack $left={6} $top={2}>
              <SmallButton aria-label="Pokaż szczegóły"><DetailIco plus /></SmallButton>
              <SmallButton aria-label="Ukryj szczegóły"><DetailIco /></SmallButton>
            </Stack>
          </GroupBody>
          <GroupLabel>Konspekt</GroupLabel>
          <Launcher aria-label="Ustawienia konspektu">
            <Ico w={7} h={7} stroke="#888"><path d="M.5 5V.5H5M2.500 2.500l4 4M6.500 3v3.500H3" /></Ico>
          </Launcher>
        </Group>
        <RibbonTail>
          <button aria-label="Zwiń wstążkę">
            <Ico w={9} h={6} stroke="#444"><path d="M1 5l3.500-3.500L8 5" strokeWidth="1.800" /></Ico>
          </button>
        </RibbonTail>
      </Ribbon>

      <FormulaBar>
        <Field $w={95}>
          <NameInput aria-label="Pole nazwy" value={name} onChange={(e) => setName(e.target.value)} />
          <FieldButton $w={18} aria-label="Lista nazw"><Caret c="#555" w={7} /></FieldButton>
        </Field>
        <Dots $w={28}><i /><i /><i /></Dots>
        <Field $w={103}>
          <FieldButton $w={34} aria-label="Anuluj">
            <Ico w={16} h={14} stroke="#555"><path d="M1 1c5 3 9 7 13.500 12M15 1C9 4 5 8 1.500 13" strokeWidth="2.400" /></Ico>
          </FieldButton>
          <FieldButton $w={34} aria-label="Wpis">
            <Ico w={18} h={14} stroke="#666"><path d="M1 8l5 4.500L17 1" strokeWidth="3.400" /></Ico>
          </FieldButton>
          <FieldButton $w={34} aria-label="Wstaw funkcję">
            <Ico w={18} h={20} stroke="#555">
              <path d="M10.500 2c-3-2-4 1-4.500 5L5 14c-.5 4-2 5-4 4M3 7h6.500" strokeWidth="2" />
              <path d="M10 8c2.500-1 3 7 6.500 7M17 8c-3 0-4 7-7.500 7" strokeWidth="1.800" />
            </Ico>
          </FieldButton>
        </Field>
        <Field>
          <FormulaInput aria-label="Pasek formuły" value={value} onChange={edit} />
          <FieldButton $w={14} aria-label="Rozwiń pasek formuły">
            <Ico w={12} h={8} stroke="#555"><path d="M1 1l5 5 5-5" strokeWidth="2.200" /></Ico>
          </FieldButton>
        </Field>
      </FormulaBar>

      <SheetArea>
        <GridClip>
          <Grid>
            <colgroup>
              <col width={25} />
              {WIDTHS.map((w, i) => <col key={i} width={w} />)}
              <col />
            </colgroup>
            <thead>
              <tr>
                <Corner aria-label="Zaznacz wszystko">
                  <svg width="11" height="11" viewBox="0 0 11 11" fill="#bdbdbd"><path d="M11 0v11H0z" /></svg>
                </Corner>
                {COLS.map((c) => <ColHead key={c || 'last'} $active={c === 'I'}>{c}</ColHead>)}
              </tr>
            </thead>
            <tbody>
              {ROWS.map((r) => (
                <BodyRow key={r}>
                  <RowHead $active={r === 8} $mark={r <= 2}>{r}</RowHead>
                  {COLS.map((c) => renderCell(c, r))}
                </BodyRow>
              ))}
            </tbody>
          </Grid>
        </GridClip>
        <VScroll>
          <ScrollButton aria-label="W górę"><Arrow d="M0 5.500h7L3.500 2z" /></ScrollButton>
          <Thumb />
          <Track $size={20} />
          <ScrollButton aria-label="W dół"><Arrow d="M0 2h7L3.500 5.500z" /></ScrollButton>
        </VScroll>
      </SheetArea>

      <SheetTabs>
        <SheetNav>
          <NavButton aria-label="Poprzedni arkusz"><svg width="4" height="7" viewBox="0 0 4 7" fill="#aaa"><path d="M4 0v7L0 3.500z" /></svg></NavButton>
          <NavButton aria-label="Następny arkusz"><svg width="4" height="7" viewBox="0 0 4 7" fill="#aaa"><path d="M0 0v7l4-3.500z" /></svg></NavButton>
        </SheetNav>
        <SheetTab>Arkusz1</SheetTab>
        <TabRest>
          <button aria-label="Nowy arkusz">
            <Ico w={16} h={16} stroke="#666"><circle cx="8" cy="8" r="7" strokeWidth="1.200" /><path d="M4.500 8h7M8 4.500v7" strokeWidth="1.800" /></Ico>
          </button>
          <Spacer />
          <Dots $w={30}><i /><i /><i /></Dots>
          <HScroll>
            <ScrollButton aria-label="W lewo"><Arrow d="M5 0v7L1.500 3.500z" /></ScrollButton>
            <Track $size={57} />
            <Thumb />
            <ScrollButton aria-label="W prawo"><Arrow d="M2 0v7l3.500-3.500z" /></ScrollButton>
          </HScroll>
        </TabRest>
      </SheetTabs>

      <StatusBar>
        WPROWADŹ
        <Ico w={13} h={13} stroke="#cfe8d8">
          <path d="M2.500 3.500h10v9h-10zM2.500 6.500h10M4 8.500h2M7 8.500h2M10 8.500h2M4 10.700h2M7 10.700h2M10 10.700h2" strokeWidth="1.300" />
          <circle cx="3" cy="3" r="2.800" fill="#e4f3ea" stroke="none" />
        </Ico>
        <Spacer />
        <ViewButtons>
          <ViewButton aria-label="Normalny">
            <Ico w={13} h={13} stroke="#c8ead4"><path d="M1 1h11v11H1zM1 4.700h11M1 8.300h11M4.700 1v11M8.300 1v11" strokeWidth="1.300" /></Ico>
          </ViewButton>
          <ViewButton aria-label="Układ strony">
            <Ico w={14} h={13} stroke="#c8ead4"><path d="M1 1h12v11H1z" strokeWidth="1.400" /><path d="M4 3.500h6v6.500H4zM5 5.500h4M5 7.500h4" /></Ico>
          </ViewButton>
          <ViewButton aria-label="Podgląd podziału stron">
            <Ico w={13} h={13} stroke="#c8ead4"><path d="M.7 .7h11.600v11.600H.7z" strokeWidth="1.400" /><path d="M1 1h4v7H1zM6.500 1h3v7h-3z" fill="#dff5e6" stroke="none" /></Ico>
          </ViewButton>
        </ViewButtons>
        <ZoomMark aria-label="Pomniejsz">−</ZoomMark>
        <ZoomSlider type="range" min={0} max={100} defaultValue={50} aria-label="Powiększenie" />
        <ZoomMark aria-label="Powiększ">+</ZoomMark>
        <ZoomValue>100%</ZoomValue>
      </StatusBar>

      <TaskBar>
        <TaskButton aria-label="Start">
          <Ico w={16} h={16}><path d="M0 2.300L7 1.300v6.200H0zM8 1.200L16 0v7.500H8zM0 8.500h7v6.200L0 13.700zM8 8.500h8V16l-8-1.200z" fill="#fff" stroke="none" /></Ico>
        </TaskButton>
        <TaskButton aria-label="Szukaj">
          <Ico w={16} h={16} stroke="#e8e8e8"><circle cx="10" cy="5.500" r="4.700" strokeWidth="1.500" /><path d="M6.500 9L.8 15" strokeWidth="1.700" /></Ico>
        </TaskButton>
        <TaskButton aria-label="Widok zadań">
          <Ico w={19} h={14} stroke="#d8d8d8"><path d="M4.500 1h10v12h-10zM3 3H1v8h2M16 3h2v8h-2" strokeWidth="1.300" /></Ico>
        </TaskButton>
        <Pinned>
          <TaskButton aria-label="Eksplorator plików">
            <Ico w={16} h={14}>
              <path d="M0 0h7l1 2h8v12H0z" fill="#f6dd80" stroke="none" />
              <path d="M9 1h6v1.500H9z" fill="#a8c66b" stroke="none" />
              <path d="M3 14V7h10v7h-2.500v-3.500h-5V14z" fill="#3cb3e6" stroke="none" />
            </Ico>
          </TaskButton>
          <TaskButton aria-label="Edge">
            <Ico w={15} h={16}>
              <path d="M0 7.500C.8 2.500 3.800 0 7.500 0 12 0 14.500 3 14.500 7v2H5c.2 4.500 5.500 4.500 8.500 2.500v3.200C8 17.500 1.500 15 1.500 9.500 1.500 7 3 5 5 4 2.800 4.500 1 5.800 0 7.500zM5.200 6.500h4.800c0-3.500-4.400-3.500-4.800 0z" fill="#1f7ad6" stroke="none" />
            </Ico>
          </TaskButton>
          <TaskButton aria-label="Access">
            <Ico w={15} h={15}>
              <path d="M0 0h15v15H0z" fill="#f0aec4" stroke="none" />
              <path d="M1 1h10v13H1z" fill="#fbdde7" stroke="none" />
              <path d="M3 12.500L6.500 3h1l3.500 9.500M4.500 9.500h5" stroke="#a01545" strokeWidth="2" />
            </Ico>
          </TaskButton>
          <TaskButton aria-label="Firefox">
            <Ico w={14} h={14}>
              <circle cx="7" cy="7" r="7" fill="#e8701c" stroke="none" />
              <circle cx="7.500" cy="5.500" r="4.500" fill="#2f6fb5" stroke="none" />
              <path d="M1 4c2-1 3 0 4 1.500 2 0 3 1 2 2.500-1 1 1 3 4 1.500-2 4-8 4-10-1z" fill="#f2a02c" stroke="none" />
              <path d="M12 2c2 3 2.500 7-1 10 1-4 2-6 1-10z" fill="#d8461c" stroke="none" />
            </Ico>
          </TaskButton>
          <TaskButton aria-label="Word"><OfficeLogo color="#2a5699" letter="W" lines="M10 5.500h4.500M10 8h4.500M10 10.500h4.500" /></TaskButton>
          <TaskButton aria-label="Outlook"><OfficeLogo color="#1272c4" letter="O" lines="M10 5l3 3 3-4M10 11h5" /></TaskButton>
        </Pinned>
        <RunningButton $active aria-label="Excel"><ExcelLogo /></RunningButton>
        <RunningButton aria-label="Groove">
          <Ico w={16} h={16} stroke="#fff"><path d="M11 1.800A7 7 0 1 0 14.500 6" strokeWidth="2" /><circle cx="8" cy="8.500" r="2.800" strokeWidth="2" /><path d="M11 1l3 2.500" strokeWidth="2" /></Ico>
        </RunningButton>
        <RunningButton aria-label="Rejestrator">
          <Ico w={15} h={15}>
            <path d="M7 5h8v6H7z" fill="#8aa83c" stroke="none" />
            <path d="M9 6.500h6v3H9z" fill="#566b24" stroke="none" />
            <circle cx="4.500" cy="4" r="3.200" fill="#555" stroke="#b8b8b8" strokeWidth="1.600" />
            <path d="M3 7h3.500v8H3z" fill="#9a9a9a" stroke="none" />
          </Ico>
        </RunningButton>
        <Tray>
          <TrayButton $w={18} aria-label="Ukryte ikony">
            <Ico w={11} h={7} stroke="#eee"><path d="M.8 6l4.700-4.700L10.200 6" strokeWidth="1.400" /></Ico>
          </TrayButton>
          <TrayButton $w={30} aria-label="Bateria">
            <Ico w={16} h={11} stroke="#eee"><path d="M5.500 2.500h8v7h-8zM14 4.500h1.500v3H14M1 1v3h3V1M2.500 4v2.500h3" strokeWidth="1.200" /><path d="M8 4h4v4H8z" fill="#eee" stroke="none" /></Ico>
          </TrayButton>
          <TrayButton $w={18} aria-label="Sieć">
            <Ico w={12} h={12} stroke="#ddd"><path d="M.7 12C.7 6 5 1 12 .7M4 12c0-4 3-8 8-8.200M7 12c0-2.500 2-5 5-5.200" strokeWidth="1.300" /><circle cx="10.500" cy="10.500" r="1.500" fill="#eee" stroke="none" /></Ico>
          </TrayButton>
          <TrayButton $w={24} aria-label="Centrum akcji">
            <Ico w={14} h={15} stroke="#111"><path d="M0 0h14v11H9.500L7 14.500 5.500 11H0z" fill="#fff" stroke="none" /><path d="M2.500 3.500h9M2.500 6.500h9" strokeWidth="1.300" /></Ico>
          </TrayButton>
          <TrayButton $w={32}>POL</TrayButton>
          <TrayButton $w={75}>20:31</TrayButton>
        </Tray>
        <ShowDesktop aria-label="Pokaż pulpit" />
      </TaskBar>
    </Window>
  );
}
